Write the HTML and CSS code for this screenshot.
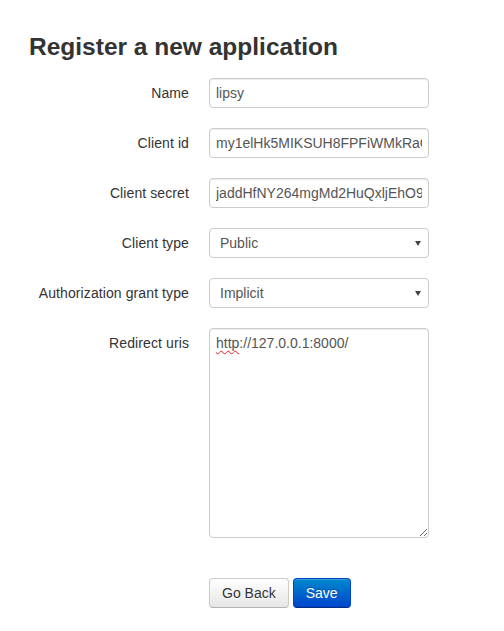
FILE: index.html
```html
<!DOCTYPE html>
<html>
<head>
<meta charset="utf-8">
<title>Register a new application</title>
<link rel="stylesheet" href="styles.css">
</head>
<body>
<div class="container">
  <h2 class="title">Register a new application</h2>
  <form class="form-horizontal">
    <div class="control-group">
      <label class="control-label">Name</label>
      <div class="controls"><input class="input" type="text" value="lipsy"></div>
    </div>
    <div class="control-group">
      <label class="control-label">Client id</label>
      <div class="controls"><input class="input" type="text" value="my1elHk5MIKSUH8FPFiWMkRaGgF1d9zmp0bi1e7S"></div>
    </div>
    <div class="control-group">
      <label class="control-label">Client secret</label>
      <div class="controls"><input class="input" type="text" value="jaddHfNY264mgMd2HuQxljEhO9xLyNAnCvhZ7Yki"></div>
    </div>
    <div class="control-group">
      <label class="control-label">Client type</label>
      <div class="controls">
        <span class="select-wrap">
          <select class="select"><option>Public</option><option>Confidential</option></select>
        </span>
      </div>
    </div>
    <div class="control-group">
      <label class="control-label">Authorization grant type</label>
      <div class="controls">
        <span class="select-wrap">
          <select class="select"><option>Implicit</option><option>Authorization code</option></select>
        </span>
      </div>
    </div>
    <div class="control-group">
      <label class="control-label">Redirect uris</label>
      <div class="controls">
        <div class="textarea"><span class="misspelled">http</span>://127.0.0.1:8000/</div>
      </div>
    </div>
    <div class="form-actions">
      <button type="button" class="btn">Go Back</button>
      <button type="button" class="btn btn-primary">Save</button>
    </div>
  </form>
</div>
</body>
</html>
```

FILE: styles.css
```css
* { box-sizing: border-box; }

body {
  margin: 0;
  background: #fff;
  color: #333;
  font-family: "Liberation Sans", Arial, sans-serif;
  font-size: 14px;
  line-height: 20px;
}

.container {
  padding: 27px 0 0 29px;
}

.title {
  margin: 0 0 11px;
  font-size: 24.5px;
  line-height: 40px;
  font-weight: bold;
  color: #333;
}

.form-horizontal {
  margin: 0;
}

.control-group {
  display: flex;
  align-items: flex-start;
  margin-bottom: 20px;
}

.control-label {
  width: 160px;
  flex: none;
  padding-top: 5px;
  text-align: right;
  color: #333;
  letter-spacing: 0.1px;
}

.controls {
  margin-left: 20px;
}

.input,
.select,
.textarea {
  display: block;
  width: 220px;
  height: 30px;
  padding: 4px 6px;
  border: 1px solid #ccc;
  border-radius: 4px;
  background: #fff;
  color: #555;
  font-family: inherit;
  font-size: 14px;
  line-height: 20px;
  box-shadow: inset 0 1px 1px rgba(0, 0, 0, 0.075);
  outline: none;
}

.select-wrap {
  position: relative;
  display: block;
}

.select {
  appearance: none;
  -webkit-appearance: none;
  padding-left: 10px;
  box-shadow: none;
}

.select-wrap::after {
  content: "";
  position: absolute;
  right: 8px;
  top: 13px;
  width: 0;
  height: 0;
  border-top: 5px solid #444;
  border-left: 3px solid transparent;
  border-right: 3px solid transparent;
}

.textarea {
  height: 210px;
  overflow: auto;
  resize: both;
  white-space: pre-wrap;
}

.misspelled {
  text-decoration: underline wavy #e02020;
  text-decoration-thickness: 1px;
  text-underline-offset: 2px;
  text-decoration-skip-ink: none;
}

.form-actions {
  display: flex;
  gap: 4px;
  margin: 40px 0 0 180px;
}

.btn {
  height: 30px;
  padding: 4px 12px;
  font-family: inherit;
  font-size: 14px;
  line-height: 20px;
  color: #333;
  text-shadow: 0 1px 1px rgba(255, 255, 255, 0.75);
  background: linear-gradient(to bottom, #ffffff, #e6e6e6);
  border: 1px solid #cccccc;
  border-bottom-color: #b3b3b3;
  border-radius: 4px;
  box-shadow: inset 0 1px 0 rgba(255, 255, 255, 0.2), 0 1px 2px rgba(0, 0, 0, 0.05);
  cursor: pointer;
}

.btn-primary {
  color: #fff;
  text-shadow: 0 -1px 0 rgba(0, 0, 0, 0.25);
  background: linear-gradient(to bottom, #0088cc, #0044cc);
  border-color: #0044cc #0044cc #002a80;
}
```
